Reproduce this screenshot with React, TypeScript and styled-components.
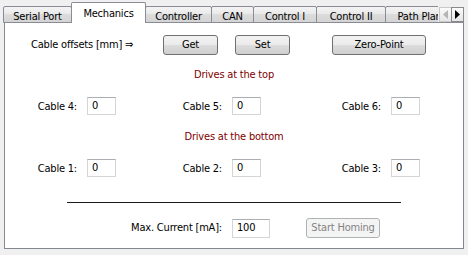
import React from "react";
import styled, { createGlobalStyle } from "styled-components";

const GlobalStyle = createGlobalStyle`
  html, body {
    margin: 0;
    padding: 0;
    background: #f0f0f0;
  }
  body {
    font-family: "DejaVu Sans Condensed", "Liberation Sans", sans-serif;
    font-size: 11px;
    letter-spacing: -0.2px;
    color: #000;
  }
`;

const Window = styled.div`
  width: 468px;
  height: 255px;
  box-sizing: border-box;
  padding: 2px 4px 0 4px;
  background: #f0f0f0;
`;

const TabBar = styled.div`
  display: flex;
  height: 20px;
`;

const TabStrip = styled.div`
  display: flex;
  align-items: flex-end;
  width: 436px;
  height: 21px;
  overflow: hidden;
  padding-left: 1px;
  margin-left: -1px;
  position: relative;
  z-index: 1;
`;

const Tab = styled.div<{ $w: number; $active?: boolean }>`
  flex: none;
  box-sizing: border-box;
  width: ${(p) => p.$w}px;
  height: ${(p) => (p.$active ? 21 : 17)}px;
  margin-left: -1px;
  padding-top: ${(p) => (p.$active ? 4 : 3)}px;
  border: 1px solid #898c95;
  border-bottom: ${(p) => (p.$active ? "none" : "1px solid #898c95")};
  border-radius: 2px 2px 0 0;
  background: ${(p) =>
    p.$active
      ? "#ffffff"
      : "linear-gradient(#f4f4f4, #e8e8e8 50%, #dcdcdc 50%, #d4d4d4)"};
  position: relative;
  z-index: ${(p) => (p.$active ? 2 : 1)};
  text-align: center;
  line-height: 13px;
  white-space: nowrap;
  overflow: hidden;
`;

const Arrows = styled.div`
  display: flex;
  margin-top: 5px;
  margin-left: 1px;
  height: 15px;
`;

const ArrowButton = styled.div<{ $disabled?: boolean }>`
  box-sizing: border-box;
  width: 13px;
  height: 15px;
  margin-left: -1px;
  border: 1px solid ${(p) => (p.$disabled ? "#c9c9c9" : "#8a8a8a")};
  background: linear-gradient(#fbfbfb, #e6e6e6);
  display: flex;
  align-items: center;
  justify-content: center;
  &:first-child {
    margin-left: 0;
  }
`;

const Panel = styled.div`
  box-sizing: border-box;
  width: 460px;
  height: 227px;
  border: 1px solid #898c95;
  border-right-color: #828790;
  border-bottom-color: #828790;
  background: #ffffff;
  display: flex;
  flex-direction: column;
  padding-top: 12px;
`;

const TopRow = styled.div`
  display: flex;
  align-items: center;
  height: 20px;
  padding-left: 26px;
`;

const OffsetLabel = styled.div`
  width: 132px;
  line-height: 14px;
`;

const Button = styled.div<{ $w: number; $ml?: number; $disabled?: boolean }>`
  box-sizing: border-box;
  width: ${(p) => p.$w}px;
  height: 20px;
  margin-left: ${(p) => p.$ml ?? 0}px;
  border: 1px solid ${(p) => (p.$disabled ? "#adb2b5" : "#707070")};
  border-radius: 3px;
  background: ${(p) =>
    p.$disabled
      ? "#f4f4f4"
      : "linear-gradient(#f2f2f2, #ebebeb 50%, #dddddd 50%, #cfcfcf)"};
  color: ${(p) => (p.$disabled ? "#838383" : "#000")};
  display: flex;
  align-items: center;
  justify-content: center;
  line-height: 14px;
  white-space: nowrap;
`;

const Heading = styled.div<{ $mt: number }>`
  margin-top: ${(p) => p.$mt}px;
  color: #800000;
  text-align: center;
  line-height: 14px;
`;

const CableGrid = styled.div`
  display: grid;
  grid-template-columns: 111px 145px 159px;
  margin-top: 15px;
  height: 18px;
`;

const CableCell = styled.div`
  display: flex;
  align-items: center;
  justify-content: flex-end;
  gap: 10px;
`;

const Input = styled.div<{ $w: number; $h: number }>`
  box-sizing: border-box;
  width: ${(p) => p.$w}px;
  height: ${(p) => p.$h}px;
  border: 1px solid #d5d5d5;
  border-top-color: #abadb3;
  background: #fff;
  padding-left: 4px;
  display: flex;
  align-items: center;
  line-height: 14px;
`;

const Rule = styled.div`
  margin: 25px 0 0 62px;
  width: 334px;
  height: 1px;
  background: #1a1a1a;
`;

const BottomRow = styled.div`
  display: flex;
  align-items: center;
  margin-top: 15px;
  height: 20px;
`;

const CurrentLabel = styled.div`
  width: 217px;
  text-align: right;
  margin-right: 10px;
  line-height: 14px;
`;

const Triangle: React.FC<{ dir: "left" | "right"; color: string }> = ({
  dir,
  color,
}) => (
  <svg width="5" height="9" viewBox="0 0 5 9">
    {dir === "left" ? (
      <path d="M5 0 L0 4.5 L5 9 Z" fill={color} />
    ) : (
      <path d="M0 0 L5 4.5 L0 9 Z" fill={color} />
    )}
  </svg>
);

const tabs = [
  { label: "Serial Port", w: 69 },
  { label: "Mechanics", w: 75, active: true },
  { label: "Controller", w: 67 },
  { label: "CAN", w: 43 },
  { label: "Control I", w: 64 },
  { label: "Control II", w: 70 },
  { label: "Path Planning", w: 90 },
];

const topCables = ["Cable 4:", "Cable 5:", "Cable 6:"];
const bottomCables = ["Cable 1:", "Cable 2:", "Cable 3:"];

const App: React.FC = () => {
  return (
    <Window>
      <GlobalStyle />
      <TabBar>
        <TabStrip>
          {tabs.map((t) => (
            <Tab key={t.label} $w={t.w} $active={t.active}>
              {t.label}
            </Tab>
          ))}
        </TabStrip>
        <Arrows>
          <ArrowButton $disabled>
            <Triangle dir="left" color="#b4b4b4" />
          </ArrowButton>
          <ArrowButton>
            <Triangle dir="right" color="#000" />
          </ArrowButton>
        </Arrows>
      </TabBar>
      <Panel>
        <TopRow>
          <OffsetLabel>Cable offsets [mm] ⇒</OffsetLabel>
          <Button $w={55}>Get</Button>
          <Button $w={55} $ml={17}>
            Set
          </Button>
          <Button $w={94} $ml={42}>
            Zero-Point
          </Button>
        </TopRow>

        <Heading $mt={13}>Drives at the top</Heading>
        <CableGrid>
          {topCables.map((c) => (
            <CableCell key={c}>
              <span>{c}</span>
              <Input $w={29} $h={18}>0</Input>
            </CableCell>
          ))}
        </CableGrid>

        <Heading $mt={15}>Drives at the bottom</Heading>
        <CableGrid>
          {bottomCables.map((c) => (
            <CableCell key={c}>
              <span>{c}</span>
              <Input $w={29} $h={18}>0</Input>
            </CableCell>
          ))}
        </CableGrid>

        <Rule />

        <BottomRow>
          <CurrentLabel>Max. Current [mA]:</CurrentLabel>
          <Input $w={38} $h={19}>100</Input>
          <Button $w={74} $ml={36} $disabled>
            Start Homing
          </Button>
        </BottomRow>
      </Panel>
    </Window>
  );
};

export default App;
